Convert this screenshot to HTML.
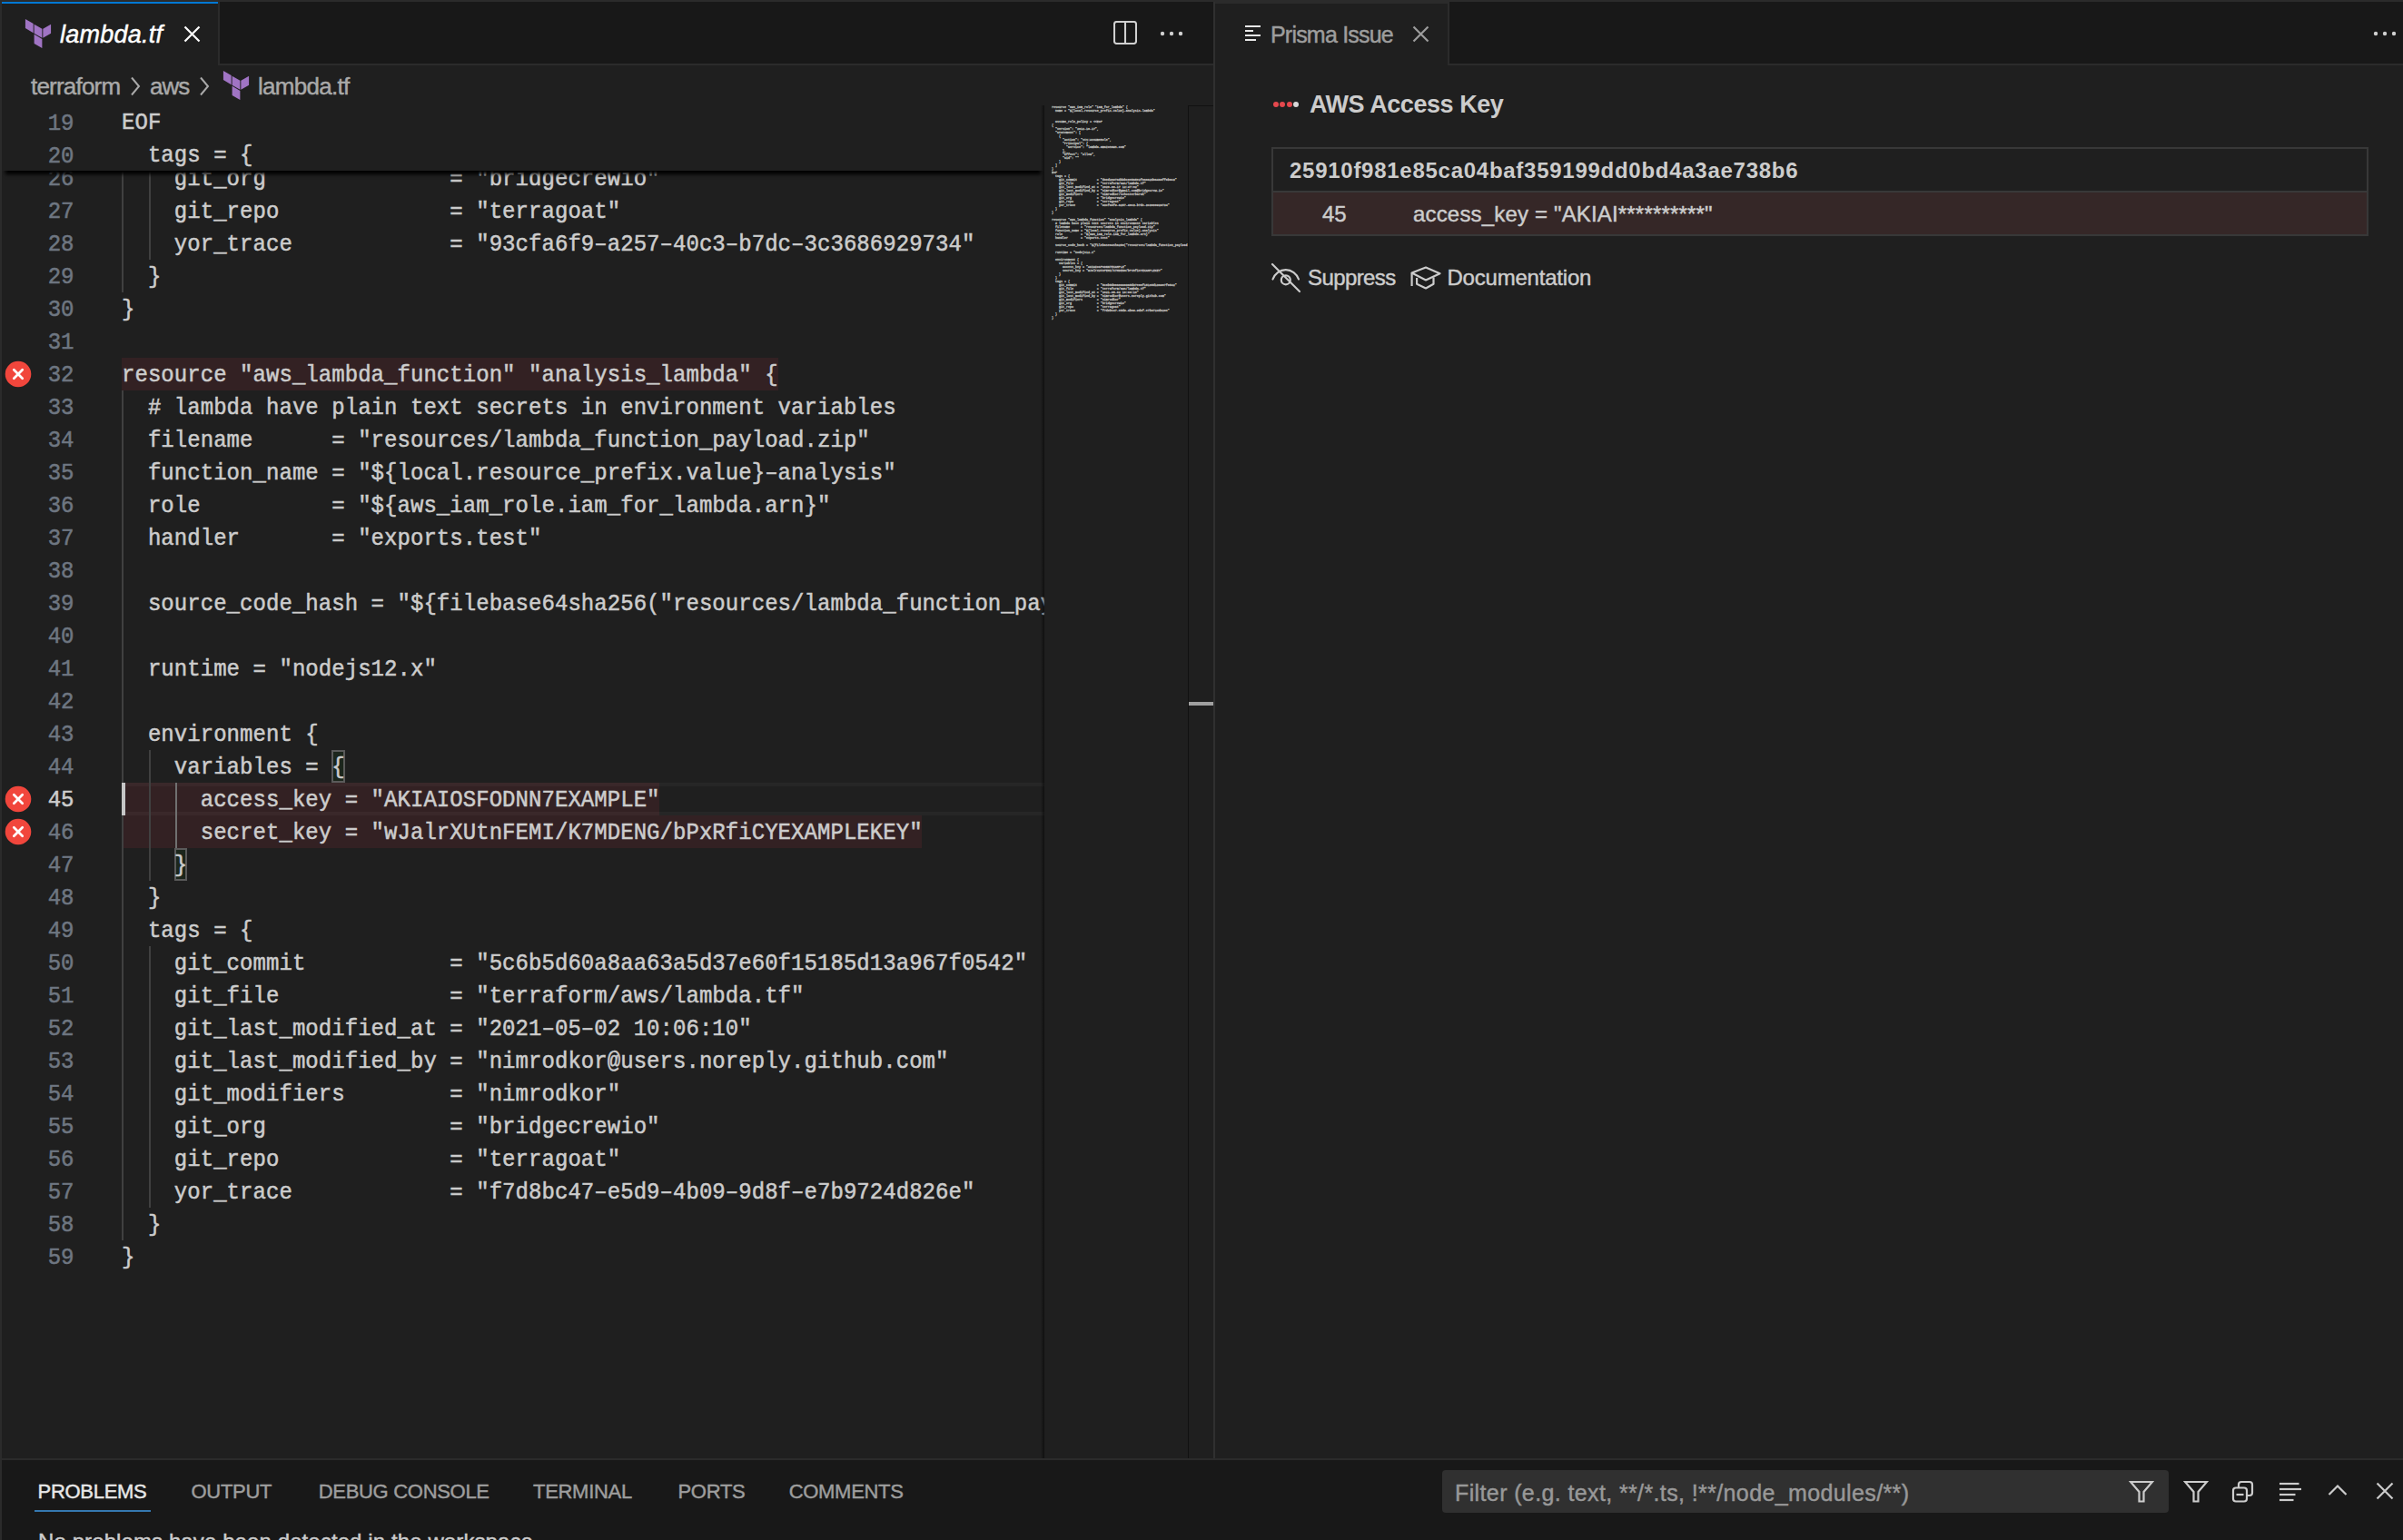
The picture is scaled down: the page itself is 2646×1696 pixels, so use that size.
<!DOCTYPE html>
<html><head><meta charset="utf-8"><style>
html,body{margin:0;padding:0}
body{width:2646px;height:1696px;background:#1f1f1f;position:relative;overflow:hidden;font-family:'Liberation Sans', sans-serif}
</style></head><body>
<div style="position:absolute;left:0px;top:0px;width:2646px;height:2px;background:#2b2b2b;"></div><div style="position:absolute;left:0px;top:0px;width:2px;height:1696px;background:#2b2b2b;"></div><div style="position:absolute;left:2px;top:2px;width:1334px;height:70px;background:#181818;"></div><div style="position:absolute;left:2px;top:70px;width:1334px;height:2px;background:#2b2b2b;"></div><div style="position:absolute;left:2px;top:2px;width:238px;height:70px;background:#1f1f1f;"></div><div style="position:absolute;left:2px;top:2px;width:238px;height:2px;background:#0078d4;"></div><div style="position:absolute;left:240px;top:2px;width:2px;height:70px;background:#2b2b2b;"></div><div style="position:absolute;left:1336px;top:2px;width:2px;height:1604px;background:#303030;"></div><div style="position:absolute;left:1338px;top:2px;width:1308px;height:70px;background:#181818;"></div><div style="position:absolute;left:1338px;top:70px;width:1308px;height:2px;background:#2b2b2b;"></div><div style="position:absolute;left:1338px;top:2px;width:256px;height:70px;background:#1f1f1f;"></div><div style="position:absolute;left:1338px;top:2px;width:256px;height:2px;background:#2b2b2b;"></div><div style="position:absolute;left:1594px;top:2px;width:2px;height:70px;background:#2b2b2b;"></div><svg style="position:absolute;left:26px;top:21px;" width="32" height="32" viewBox="0 0 24 24"><path fill="#a074c4" d="M1.44 0v7.575l6.561 3.79V3.787zm21.12 4.227l-6.561 3.791v7.574l6.56-3.787zM8.72 4.23v7.575l6.561 3.787V8.018zm0 8.405v7.575L15.28 24v-7.578z"/></svg><div style="position:absolute;left:66px;top:22px;font-family:'Liberation Sans', sans-serif;font-size:27px;line-height:32px;font-weight:400;font-style:italic;color:#ffffff;white-space:pre;letter-spacing:0.25px;-webkit-text-stroke:0.45px currentColor;">lambda.tf</div><svg style="position:absolute;left:202px;top:28px;" width="19" height="19" viewBox="0 0 19 19"><path d="M1.5 1.5L17.5 17.5M17.5 1.5L1.5 17.5" stroke="#ffffff" stroke-width="2.2" fill="none"/></svg><svg style="position:absolute;left:1226px;top:23px;" width="26" height="26" viewBox="0 0 26 26"><rect x="1" y="1" width="24" height="24" rx="2.5" stroke="#d0d0d0" stroke-width="2.1" fill="none"/><line x1="13" y1="1.5" x2="13" y2="24.5" stroke="#d0d0d0" stroke-width="2.1"/></svg><svg style="position:absolute;left:1276px;top:32px;" width="28" height="10" viewBox="0 0 28 10"><circle cx="4" cy="5" r="2.2" fill="#d0d0d0"/><circle cx="14" cy="5" r="2.2" fill="#d0d0d0"/><circle cx="24" cy="5" r="2.2" fill="#d0d0d0"/></svg><svg style="position:absolute;left:2612px;top:32px;" width="28" height="10" viewBox="0 0 28 10"><circle cx="4" cy="5" r="2.2" fill="#d0d0d0"/><circle cx="14" cy="5" r="2.2" fill="#d0d0d0"/><circle cx="24" cy="5" r="2.2" fill="#d0d0d0"/></svg><svg style="position:absolute;left:1370px;top:26px;" width="20" height="21" viewBox="0 0 20 21"><g stroke="#e8e8e8" stroke-width="2"><line x1="1" y1="3" x2="18" y2="3"/><line x1="1" y1="8" x2="10" y2="8"/><line x1="1" y1="13" x2="18" y2="13"/><line x1="1" y1="18" x2="13" y2="18"/></g></svg><div style="position:absolute;left:1399px;top:23px;font-family:'Liberation Sans', sans-serif;font-size:25px;line-height:30px;font-weight:400;font-style:normal;color:#9d9d9d;white-space:pre;letter-spacing:-0.8px;-webkit-text-stroke:0.45px currentColor;">Prisma Issue</div><svg style="position:absolute;left:1555px;top:28px;" width="20" height="20" viewBox="0 0 20 20"><path d="M1.5 1.5L17.5 17.5M17.5 1.5L1.5 17.5" stroke="#9d9d9d" stroke-width="2.2" fill="none"/></svg><div style="position:absolute;left:34px;top:79px;font-family:'Liberation Sans', sans-serif;font-size:26px;line-height:32px;font-weight:400;font-style:normal;color:#a9a9a9;white-space:pre;letter-spacing:-0.8px;-webkit-text-stroke:0.45px currentColor;">terraform</div><svg style="position:absolute;left:143px;top:84px;" width="12" height="22" viewBox="0 0 12 22"><path d="M2 1.5L10 11L2 20.5" stroke="#a9a9a9" stroke-width="2" fill="none"/></svg><div style="position:absolute;left:165px;top:79px;font-family:'Liberation Sans', sans-serif;font-size:26px;line-height:32px;font-weight:400;font-style:normal;color:#a9a9a9;white-space:pre;letter-spacing:-1.0px;-webkit-text-stroke:0.45px currentColor;">aws</div><svg style="position:absolute;left:219px;top:84px;" width="12" height="22" viewBox="0 0 12 22"><path d="M2 1.5L10 11L2 20.5" stroke="#a9a9a9" stroke-width="2" fill="none"/></svg><svg style="position:absolute;left:244px;top:78px;" width="32" height="32" viewBox="0 0 24 24"><path fill="#a074c4" d="M1.44 0v7.575l6.561 3.79V3.787zm21.12 4.227l-6.561 3.791v7.574l6.56-3.787zM8.72 4.23v7.575l6.561 3.787V8.018zm0 8.405v7.575L15.28 24v-7.578z"/></svg><div style="position:absolute;left:284px;top:79px;font-family:'Liberation Sans', sans-serif;font-size:26px;line-height:32px;font-weight:400;font-style:normal;color:#a9a9a9;white-space:pre;letter-spacing:-0.7px;-webkit-text-stroke:0.45px currentColor;">lambda.tf</div><div style="position:absolute;left:2px;top:116px;width:1148px;height:1491px;overflow:hidden"><div style="position:absolute;left:132px;top:278px;width:722.5px;height:36px;background:#332123"></div><div style="position:absolute;left:132px;top:746px;width:592.4px;height:36px;background:#332123"></div><div style="position:absolute;left:132px;top:782px;width:881.4px;height:36px;background:#332123"></div><div style="position:absolute;left:132px;top:746px;width:1016px;height:36px;box-sizing:border-box;border-top:4px solid rgba(255,255,255,0.035);border-bottom:4px solid rgba(255,255,255,0.035)"></div><div style="position:absolute;left:132.0px;top:62px;width:2px;height:144px;background:#404040"></div><div style="position:absolute;left:161.9px;top:62px;width:2px;height:108px;background:#404040"></div><div style="position:absolute;left:132.0px;top:314px;width:2px;height:936px;background:#404040"></div><div style="position:absolute;left:161.9px;top:710px;width:2px;height:144px;background:#404040"></div><div style="position:absolute;left:190.8px;top:746px;width:2px;height:72px;background:#707070"></div><div style="position:absolute;left:161.9px;top:926px;width:2px;height:288px;background:#404040"></div><div style="position:absolute;left:363.2px;top:710px;width:14.4px;height:36px;box-sizing:border-box;border:2px solid #5a5a5a;background:#1c261c"></div><div style="position:absolute;left:189.8px;top:818px;width:14.4px;height:36px;box-sizing:border-box;border:2px solid #5a5a5a;background:#1c261c"></div><div style="position:absolute;left:132px;top:63.6px;height:36px;font-family:'Liberation Mono', monospace;font-size:24px;line-height:36px;letter-spacing:0.05px;color:#cccccc;white-space:pre;transform:scaleY(1.08);transform-origin:0 24.4px;-webkit-text-stroke:0.5px currentColor;">    git_org              = &quot;bridgecrewio&quot;</div><div style="position:absolute;left:132px;top:99.6px;height:36px;font-family:'Liberation Mono', monospace;font-size:24px;line-height:36px;letter-spacing:0.05px;color:#cccccc;white-space:pre;transform:scaleY(1.08);transform-origin:0 24.4px;-webkit-text-stroke:0.5px currentColor;">    git_repo             = &quot;terragoat&quot;</div><div style="position:absolute;left:132px;top:135.6px;height:36px;font-family:'Liberation Mono', monospace;font-size:24px;line-height:36px;letter-spacing:0.05px;color:#cccccc;white-space:pre;transform:scaleY(1.08);transform-origin:0 24.4px;-webkit-text-stroke:0.5px currentColor;">    yor_trace            = &quot;93cfa6f9&#8211;a257&#8211;40c3&#8211;b7dc&#8211;3c3686929734&quot;</div><div style="position:absolute;left:132px;top:171.6px;height:36px;font-family:'Liberation Mono', monospace;font-size:24px;line-height:36px;letter-spacing:0.05px;color:#cccccc;white-space:pre;transform:scaleY(1.08);transform-origin:0 24.4px;-webkit-text-stroke:0.5px currentColor;">  }</div><div style="position:absolute;left:132px;top:207.6px;height:36px;font-family:'Liberation Mono', monospace;font-size:24px;line-height:36px;letter-spacing:0.05px;color:#cccccc;white-space:pre;transform:scaleY(1.08);transform-origin:0 24.4px;-webkit-text-stroke:0.5px currentColor;">}</div><div style="position:absolute;left:132px;top:243.6px;height:36px;font-family:'Liberation Mono', monospace;font-size:24px;line-height:36px;letter-spacing:0.05px;color:#cccccc;white-space:pre;transform:scaleY(1.08);transform-origin:0 24.4px;-webkit-text-stroke:0.5px currentColor;"></div><div style="position:absolute;left:132px;top:279.6px;height:36px;font-family:'Liberation Mono', monospace;font-size:24px;line-height:36px;letter-spacing:0.05px;color:#cccccc;white-space:pre;transform:scaleY(1.08);transform-origin:0 24.4px;-webkit-text-stroke:0.5px currentColor;">resource &quot;aws_lambda_function&quot; &quot;analysis_lambda&quot; {</div><div style="position:absolute;left:132px;top:315.6px;height:36px;font-family:'Liberation Mono', monospace;font-size:24px;line-height:36px;letter-spacing:0.05px;color:#cccccc;white-space:pre;transform:scaleY(1.08);transform-origin:0 24.4px;-webkit-text-stroke:0.5px currentColor;">  # lambda have plain text secrets in environment variables</div><div style="position:absolute;left:132px;top:351.6px;height:36px;font-family:'Liberation Mono', monospace;font-size:24px;line-height:36px;letter-spacing:0.05px;color:#cccccc;white-space:pre;transform:scaleY(1.08);transform-origin:0 24.4px;-webkit-text-stroke:0.5px currentColor;">  filename      = &quot;resources/lambda_function_payload.zip&quot;</div><div style="position:absolute;left:132px;top:387.6px;height:36px;font-family:'Liberation Mono', monospace;font-size:24px;line-height:36px;letter-spacing:0.05px;color:#cccccc;white-space:pre;transform:scaleY(1.08);transform-origin:0 24.4px;-webkit-text-stroke:0.5px currentColor;">  function_name = &quot;${local.resource_prefix.value}&#8211;analysis&quot;</div><div style="position:absolute;left:132px;top:423.6px;height:36px;font-family:'Liberation Mono', monospace;font-size:24px;line-height:36px;letter-spacing:0.05px;color:#cccccc;white-space:pre;transform:scaleY(1.08);transform-origin:0 24.4px;-webkit-text-stroke:0.5px currentColor;">  role          = &quot;${aws_iam_role.iam_for_lambda.arn}&quot;</div><div style="position:absolute;left:132px;top:459.6px;height:36px;font-family:'Liberation Mono', monospace;font-size:24px;line-height:36px;letter-spacing:0.05px;color:#cccccc;white-space:pre;transform:scaleY(1.08);transform-origin:0 24.4px;-webkit-text-stroke:0.5px currentColor;">  handler       = &quot;exports.test&quot;</div><div style="position:absolute;left:132px;top:495.6px;height:36px;font-family:'Liberation Mono', monospace;font-size:24px;line-height:36px;letter-spacing:0.05px;color:#cccccc;white-space:pre;transform:scaleY(1.08);transform-origin:0 24.4px;-webkit-text-stroke:0.5px currentColor;"></div><div style="position:absolute;left:132px;top:531.6px;height:36px;font-family:'Liberation Mono', monospace;font-size:24px;line-height:36px;letter-spacing:0.05px;color:#cccccc;white-space:pre;transform:scaleY(1.08);transform-origin:0 24.4px;-webkit-text-stroke:0.5px currentColor;">  source_code_hash = &quot;${filebase64sha256(&quot;resources/lambda_function_payload.zip&quot;)}&quot;</div><div style="position:absolute;left:132px;top:567.6px;height:36px;font-family:'Liberation Mono', monospace;font-size:24px;line-height:36px;letter-spacing:0.05px;color:#cccccc;white-space:pre;transform:scaleY(1.08);transform-origin:0 24.4px;-webkit-text-stroke:0.5px currentColor;"></div><div style="position:absolute;left:132px;top:603.6px;height:36px;font-family:'Liberation Mono', monospace;font-size:24px;line-height:36px;letter-spacing:0.05px;color:#cccccc;white-space:pre;transform:scaleY(1.08);transform-origin:0 24.4px;-webkit-text-stroke:0.5px currentColor;">  runtime = &quot;nodejs12.x&quot;</div><div style="position:absolute;left:132px;top:639.6px;height:36px;font-family:'Liberation Mono', monospace;font-size:24px;line-height:36px;letter-spacing:0.05px;color:#cccccc;white-space:pre;transform:scaleY(1.08);transform-origin:0 24.4px;-webkit-text-stroke:0.5px currentColor;"></div><div style="position:absolute;left:132px;top:675.6px;height:36px;font-family:'Liberation Mono', monospace;font-size:24px;line-height:36px;letter-spacing:0.05px;color:#cccccc;white-space:pre;transform:scaleY(1.08);transform-origin:0 24.4px;-webkit-text-stroke:0.5px currentColor;">  environment {</div><div style="position:absolute;left:132px;top:711.6px;height:36px;font-family:'Liberation Mono', monospace;font-size:24px;line-height:36px;letter-spacing:0.05px;color:#cccccc;white-space:pre;transform:scaleY(1.08);transform-origin:0 24.4px;-webkit-text-stroke:0.5px currentColor;">    variables = {</div><div style="position:absolute;left:132px;top:747.6px;height:36px;font-family:'Liberation Mono', monospace;font-size:24px;line-height:36px;letter-spacing:0.05px;color:#cccccc;white-space:pre;transform:scaleY(1.08);transform-origin:0 24.4px;-webkit-text-stroke:0.5px currentColor;">      access_key = &quot;AKIAIOSFODNN7EXAMPLE&quot;</div><div style="position:absolute;left:132px;top:783.6px;height:36px;font-family:'Liberation Mono', monospace;font-size:24px;line-height:36px;letter-spacing:0.05px;color:#cccccc;white-space:pre;transform:scaleY(1.08);transform-origin:0 24.4px;-webkit-text-stroke:0.5px currentColor;">      secret_key = &quot;wJalrXUtnFEMI/K7MDENG/bPxRfiCYEXAMPLEKEY&quot;</div><div style="position:absolute;left:132px;top:819.6px;height:36px;font-family:'Liberation Mono', monospace;font-size:24px;line-height:36px;letter-spacing:0.05px;color:#cccccc;white-space:pre;transform:scaleY(1.08);transform-origin:0 24.4px;-webkit-text-stroke:0.5px currentColor;">    }</div><div style="position:absolute;left:132px;top:855.6px;height:36px;font-family:'Liberation Mono', monospace;font-size:24px;line-height:36px;letter-spacing:0.05px;color:#cccccc;white-space:pre;transform:scaleY(1.08);transform-origin:0 24.4px;-webkit-text-stroke:0.5px currentColor;">  }</div><div style="position:absolute;left:132px;top:891.6px;height:36px;font-family:'Liberation Mono', monospace;font-size:24px;line-height:36px;letter-spacing:0.05px;color:#cccccc;white-space:pre;transform:scaleY(1.08);transform-origin:0 24.4px;-webkit-text-stroke:0.5px currentColor;">  tags = {</div><div style="position:absolute;left:132px;top:927.6px;height:36px;font-family:'Liberation Mono', monospace;font-size:24px;line-height:36px;letter-spacing:0.05px;color:#cccccc;white-space:pre;transform:scaleY(1.08);transform-origin:0 24.4px;-webkit-text-stroke:0.5px currentColor;">    git_commit           = &quot;5c6b5d60a8aa63a5d37e60f15185d13a967f0542&quot;</div><div style="position:absolute;left:132px;top:963.6px;height:36px;font-family:'Liberation Mono', monospace;font-size:24px;line-height:36px;letter-spacing:0.05px;color:#cccccc;white-space:pre;transform:scaleY(1.08);transform-origin:0 24.4px;-webkit-text-stroke:0.5px currentColor;">    git_file             = &quot;terraform/aws/lambda.tf&quot;</div><div style="position:absolute;left:132px;top:999.6px;height:36px;font-family:'Liberation Mono', monospace;font-size:24px;line-height:36px;letter-spacing:0.05px;color:#cccccc;white-space:pre;transform:scaleY(1.08);transform-origin:0 24.4px;-webkit-text-stroke:0.5px currentColor;">    git_last_modified_at = &quot;2021&#8211;05&#8211;02 10:06:10&quot;</div><div style="position:absolute;left:132px;top:1035.6px;height:36px;font-family:'Liberation Mono', monospace;font-size:24px;line-height:36px;letter-spacing:0.05px;color:#cccccc;white-space:pre;transform:scaleY(1.08);transform-origin:0 24.4px;-webkit-text-stroke:0.5px currentColor;">    git_last_modified_by = &quot;nimrodkor@users.noreply.github.com&quot;</div><div style="position:absolute;left:132px;top:1071.6px;height:36px;font-family:'Liberation Mono', monospace;font-size:24px;line-height:36px;letter-spacing:0.05px;color:#cccccc;white-space:pre;transform:scaleY(1.08);transform-origin:0 24.4px;-webkit-text-stroke:0.5px currentColor;">    git_modifiers        = &quot;nimrodkor&quot;</div><div style="position:absolute;left:132px;top:1107.6px;height:36px;font-family:'Liberation Mono', monospace;font-size:24px;line-height:36px;letter-spacing:0.05px;color:#cccccc;white-space:pre;transform:scaleY(1.08);transform-origin:0 24.4px;-webkit-text-stroke:0.5px currentColor;">    git_org              = &quot;bridgecrewio&quot;</div><div style="position:absolute;left:132px;top:1143.6px;height:36px;font-family:'Liberation Mono', monospace;font-size:24px;line-height:36px;letter-spacing:0.05px;color:#cccccc;white-space:pre;transform:scaleY(1.08);transform-origin:0 24.4px;-webkit-text-stroke:0.5px currentColor;">    git_repo             = &quot;terragoat&quot;</div><div style="position:absolute;left:132px;top:1179.6px;height:36px;font-family:'Liberation Mono', monospace;font-size:24px;line-height:36px;letter-spacing:0.05px;color:#cccccc;white-space:pre;transform:scaleY(1.08);transform-origin:0 24.4px;-webkit-text-stroke:0.5px currentColor;">    yor_trace            = &quot;f7d8bc47&#8211;e5d9&#8211;4b09&#8211;9d8f&#8211;e7b9724d826e&quot;</div><div style="position:absolute;left:132px;top:1215.6px;height:36px;font-family:'Liberation Mono', monospace;font-size:24px;line-height:36px;letter-spacing:0.05px;color:#cccccc;white-space:pre;transform:scaleY(1.08);transform-origin:0 24.4px;-webkit-text-stroke:0.5px currentColor;">  }</div><div style="position:absolute;left:132px;top:1251.6px;height:36px;font-family:'Liberation Mono', monospace;font-size:24px;line-height:36px;letter-spacing:0.05px;color:#cccccc;white-space:pre;transform:scaleY(1.08);transform-origin:0 24.4px;-webkit-text-stroke:0.5px currentColor;">}</div><div style="position:absolute;left:0px;top:63.6px;width:79.5px;text-align:right;font-family:'Liberation Mono', monospace;font-size:24px;line-height:36px;color:#6e7681;white-space:pre;transform:scaleY(1.08);transform-origin:0 24.4px;-webkit-text-stroke:0.5px currentColor;">26</div><div style="position:absolute;left:0px;top:99.6px;width:79.5px;text-align:right;font-family:'Liberation Mono', monospace;font-size:24px;line-height:36px;color:#6e7681;white-space:pre;transform:scaleY(1.08);transform-origin:0 24.4px;-webkit-text-stroke:0.5px currentColor;">27</div><div style="position:absolute;left:0px;top:135.6px;width:79.5px;text-align:right;font-family:'Liberation Mono', monospace;font-size:24px;line-height:36px;color:#6e7681;white-space:pre;transform:scaleY(1.08);transform-origin:0 24.4px;-webkit-text-stroke:0.5px currentColor;">28</div><div style="position:absolute;left:0px;top:171.6px;width:79.5px;text-align:right;font-family:'Liberation Mono', monospace;font-size:24px;line-height:36px;color:#6e7681;white-space:pre;transform:scaleY(1.08);transform-origin:0 24.4px;-webkit-text-stroke:0.5px currentColor;">29</div><div style="position:absolute;left:0px;top:207.6px;width:79.5px;text-align:right;font-family:'Liberation Mono', monospace;font-size:24px;line-height:36px;color:#6e7681;white-space:pre;transform:scaleY(1.08);transform-origin:0 24.4px;-webkit-text-stroke:0.5px currentColor;">30</div><div style="position:absolute;left:0px;top:243.6px;width:79.5px;text-align:right;font-family:'Liberation Mono', monospace;font-size:24px;line-height:36px;color:#6e7681;white-space:pre;transform:scaleY(1.08);transform-origin:0 24.4px;-webkit-text-stroke:0.5px currentColor;">31</div><div style="position:absolute;left:0px;top:279.6px;width:79.5px;text-align:right;font-family:'Liberation Mono', monospace;font-size:24px;line-height:36px;color:#6e7681;white-space:pre;transform:scaleY(1.08);transform-origin:0 24.4px;-webkit-text-stroke:0.5px currentColor;">32</div><div style="position:absolute;left:0px;top:315.6px;width:79.5px;text-align:right;font-family:'Liberation Mono', monospace;font-size:24px;line-height:36px;color:#6e7681;white-space:pre;transform:scaleY(1.08);transform-origin:0 24.4px;-webkit-text-stroke:0.5px currentColor;">33</div><div style="position:absolute;left:0px;top:351.6px;width:79.5px;text-align:right;font-family:'Liberation Mono', monospace;font-size:24px;line-height:36px;color:#6e7681;white-space:pre;transform:scaleY(1.08);transform-origin:0 24.4px;-webkit-text-stroke:0.5px currentColor;">34</div><div style="position:absolute;left:0px;top:387.6px;width:79.5px;text-align:right;font-family:'Liberation Mono', monospace;font-size:24px;line-height:36px;color:#6e7681;white-space:pre;transform:scaleY(1.08);transform-origin:0 24.4px;-webkit-text-stroke:0.5px currentColor;">35</div><div style="position:absolute;left:0px;top:423.6px;width:79.5px;text-align:right;font-family:'Liberation Mono', monospace;font-size:24px;line-height:36px;color:#6e7681;white-space:pre;transform:scaleY(1.08);transform-origin:0 24.4px;-webkit-text-stroke:0.5px currentColor;">36</div><div style="position:absolute;left:0px;top:459.6px;width:79.5px;text-align:right;font-family:'Liberation Mono', monospace;font-size:24px;line-height:36px;color:#6e7681;white-space:pre;transform:scaleY(1.08);transform-origin:0 24.4px;-webkit-text-stroke:0.5px currentColor;">37</div><div style="position:absolute;left:0px;top:495.6px;width:79.5px;text-align:right;font-family:'Liberation Mono', monospace;font-size:24px;line-height:36px;color:#6e7681;white-space:pre;transform:scaleY(1.08);transform-origin:0 24.4px;-webkit-text-stroke:0.5px currentColor;">38</div><div style="position:absolute;left:0px;top:531.6px;width:79.5px;text-align:right;font-family:'Liberation Mono', monospace;font-size:24px;line-height:36px;color:#6e7681;white-space:pre;transform:scaleY(1.08);transform-origin:0 24.4px;-webkit-text-stroke:0.5px currentColor;">39</div><div style="position:absolute;left:0px;top:567.6px;width:79.5px;text-align:right;font-family:'Liberation Mono', monospace;font-size:24px;line-height:36px;color:#6e7681;white-space:pre;transform:scaleY(1.08);transform-origin:0 24.4px;-webkit-text-stroke:0.5px currentColor;">40</div><div style="position:absolute;left:0px;top:603.6px;width:79.5px;text-align:right;font-family:'Liberation Mono', monospace;font-size:24px;line-height:36px;color:#6e7681;white-space:pre;transform:scaleY(1.08);transform-origin:0 24.4px;-webkit-text-stroke:0.5px currentColor;">41</div><div style="position:absolute;left:0px;top:639.6px;width:79.5px;text-align:right;font-family:'Liberation Mono', monospace;font-size:24px;line-height:36px;color:#6e7681;white-space:pre;transform:scaleY(1.08);transform-origin:0 24.4px;-webkit-text-stroke:0.5px currentColor;">42</div><div style="position:absolute;left:0px;top:675.6px;width:79.5px;text-align:right;font-family:'Liberation Mono', monospace;font-size:24px;line-height:36px;color:#6e7681;white-space:pre;transform:scaleY(1.08);transform-origin:0 24.4px;-webkit-text-stroke:0.5px currentColor;">43</div><div style="position:absolute;left:0px;top:711.6px;width:79.5px;text-align:right;font-family:'Liberation Mono', monospace;font-size:24px;line-height:36px;color:#6e7681;white-space:pre;transform:scaleY(1.08);transform-origin:0 24.4px;-webkit-text-stroke:0.5px currentColor;">44</div><div style="position:absolute;left:0px;top:747.6px;width:79.5px;text-align:right;font-family:'Liberation Mono', monospace;font-size:24px;line-height:36px;color:#cccccc;white-space:pre;transform:scaleY(1.08);transform-origin:0 24.4px;-webkit-text-stroke:0.5px currentColor;">45</div><div style="position:absolute;left:0px;top:783.6px;width:79.5px;text-align:right;font-family:'Liberation Mono', monospace;font-size:24px;line-height:36px;color:#6e7681;white-space:pre;transform:scaleY(1.08);transform-origin:0 24.4px;-webkit-text-stroke:0.5px currentColor;">46</div><div style="position:absolute;left:0px;top:819.6px;width:79.5px;text-align:right;font-family:'Liberation Mono', monospace;font-size:24px;line-height:36px;color:#6e7681;white-space:pre;transform:scaleY(1.08);transform-origin:0 24.4px;-webkit-text-stroke:0.5px currentColor;">47</div><div style="position:absolute;left:0px;top:855.6px;width:79.5px;text-align:right;font-family:'Liberation Mono', monospace;font-size:24px;line-height:36px;color:#6e7681;white-space:pre;transform:scaleY(1.08);transform-origin:0 24.4px;-webkit-text-stroke:0.5px currentColor;">48</div><div style="position:absolute;left:0px;top:891.6px;width:79.5px;text-align:right;font-family:'Liberation Mono', monospace;font-size:24px;line-height:36px;color:#6e7681;white-space:pre;transform:scaleY(1.08);transform-origin:0 24.4px;-webkit-text-stroke:0.5px currentColor;">49</div><div style="position:absolute;left:0px;top:927.6px;width:79.5px;text-align:right;font-family:'Liberation Mono', monospace;font-size:24px;line-height:36px;color:#6e7681;white-space:pre;transform:scaleY(1.08);transform-origin:0 24.4px;-webkit-text-stroke:0.5px currentColor;">50</div><div style="position:absolute;left:0px;top:963.6px;width:79.5px;text-align:right;font-family:'Liberation Mono', monospace;font-size:24px;line-height:36px;color:#6e7681;white-space:pre;transform:scaleY(1.08);transform-origin:0 24.4px;-webkit-text-stroke:0.5px currentColor;">51</div><div style="position:absolute;left:0px;top:999.6px;width:79.5px;text-align:right;font-family:'Liberation Mono', monospace;font-size:24px;line-height:36px;color:#6e7681;white-space:pre;transform:scaleY(1.08);transform-origin:0 24.4px;-webkit-text-stroke:0.5px currentColor;">52</div><div style="position:absolute;left:0px;top:1035.6px;width:79.5px;text-align:right;font-family:'Liberation Mono', monospace;font-size:24px;line-height:36px;color:#6e7681;white-space:pre;transform:scaleY(1.08);transform-origin:0 24.4px;-webkit-text-stroke:0.5px currentColor;">53</div><div style="position:absolute;left:0px;top:1071.6px;width:79.5px;text-align:right;font-family:'Liberation Mono', monospace;font-size:24px;line-height:36px;color:#6e7681;white-space:pre;transform:scaleY(1.08);transform-origin:0 24.4px;-webkit-text-stroke:0.5px currentColor;">54</div><div style="position:absolute;left:0px;top:1107.6px;width:79.5px;text-align:right;font-family:'Liberation Mono', monospace;font-size:24px;line-height:36px;color:#6e7681;white-space:pre;transform:scaleY(1.08);transform-origin:0 24.4px;-webkit-text-stroke:0.5px currentColor;">55</div><div style="position:absolute;left:0px;top:1143.6px;width:79.5px;text-align:right;font-family:'Liberation Mono', monospace;font-size:24px;line-height:36px;color:#6e7681;white-space:pre;transform:scaleY(1.08);transform-origin:0 24.4px;-webkit-text-stroke:0.5px currentColor;">56</div><div style="position:absolute;left:0px;top:1179.6px;width:79.5px;text-align:right;font-family:'Liberation Mono', monospace;font-size:24px;line-height:36px;color:#6e7681;white-space:pre;transform:scaleY(1.08);transform-origin:0 24.4px;-webkit-text-stroke:0.5px currentColor;">57</div><div style="position:absolute;left:0px;top:1215.6px;width:79.5px;text-align:right;font-family:'Liberation Mono', monospace;font-size:24px;line-height:36px;color:#6e7681;white-space:pre;transform:scaleY(1.08);transform-origin:0 24.4px;-webkit-text-stroke:0.5px currentColor;">58</div><div style="position:absolute;left:0px;top:1251.6px;width:79.5px;text-align:right;font-family:'Liberation Mono', monospace;font-size:24px;line-height:36px;color:#6e7681;white-space:pre;transform:scaleY(1.08);transform-origin:0 24.4px;-webkit-text-stroke:0.5px currentColor;">59</div><div style="position:absolute;left:132px;top:746px;width:4px;height:36px;background:#c6c6c6"></div><svg style="position:absolute;left:3px;top:281px" width="30" height="30" viewBox="0 0 30 30"><circle cx="15" cy="15" r="14.3" fill="#f1463c"/><path d="M10.3 10.3L19.7 19.7M19.7 10.3L10.3 19.7" stroke="#ffffff" stroke-width="2.7" stroke-linecap="round" fill="none"/></svg><svg style="position:absolute;left:3px;top:749px" width="30" height="30" viewBox="0 0 30 30"><circle cx="15" cy="15" r="14.3" fill="#f1463c"/><path d="M10.3 10.3L19.7 19.7M19.7 10.3L10.3 19.7" stroke="#ffffff" stroke-width="2.7" stroke-linecap="round" fill="none"/></svg><svg style="position:absolute;left:3px;top:785px" width="30" height="30" viewBox="0 0 30 30"><circle cx="15" cy="15" r="14.3" fill="#f1463c"/><path d="M10.3 10.3L19.7 19.7M19.7 10.3L10.3 19.7" stroke="#ffffff" stroke-width="2.7" stroke-linecap="round" fill="none"/></svg><div style="position:absolute;left:0px;top:0px;width:1148px;height:72px;background:#1f1f1f;box-shadow:0 8px 4px -4px #000000"></div><div style="position:absolute;left:132px;top:1.6px;font-family:'Liberation Mono', monospace;font-size:24px;line-height:36px;font-weight:400;font-style:normal;color:#cccccc;white-space:pre;letter-spacing:0.05px;transform:scaleY(1.08);transform-origin:0 24.4px;-webkit-text-stroke:0.5px currentColor;">EOF</div><div style="position:absolute;left:132px;top:37.6px;font-family:'Liberation Mono', monospace;font-size:24px;line-height:36px;font-weight:400;font-style:normal;color:#cccccc;white-space:pre;letter-spacing:0.05px;transform:scaleY(1.08);transform-origin:0 24.4px;-webkit-text-stroke:0.5px currentColor;">  tags = {</div><div style="position:absolute;left:0px;top:3.1px;width:79.5px;text-align:right;font-family:'Liberation Mono', monospace;font-size:24px;line-height:36px;color:#6e7681;transform:scaleY(1.08);transform-origin:0 24.4px;-webkit-text-stroke:0.5px currentColor;">19</div><div style="position:absolute;left:0px;top:39.1px;width:79.5px;text-align:right;font-family:'Liberation Mono', monospace;font-size:24px;line-height:36px;color:#6e7681;transform:scaleY(1.08);transform-origin:0 24.4px;-webkit-text-stroke:0.5px currentColor;">20</div></div><div style="position:absolute;left:1150px;top:116px;width:158px;height:1491px;overflow:hidden"><div style="position:absolute;left:8px;top:0px;height:4px;font-family:'Liberation Mono', monospace;font-size:24px;line-height:36px;color:#bdbdbd;white-space:pre;transform-origin:0 0;transform:scale(0.1385,0.135);-webkit-text-stroke:2px currentColor">resource &quot;aws_iam_role&quot; &quot;iam_for_lambda&quot; {</div><div style="position:absolute;left:8px;top:4px;height:4px;font-family:'Liberation Mono', monospace;font-size:24px;line-height:36px;color:#bdbdbd;white-space:pre;transform-origin:0 0;transform:scale(0.1385,0.135);-webkit-text-stroke:2px currentColor">  name = &quot;${local.resource_prefix.value}-analysis-lambda&quot;</div><div style="position:absolute;left:8px;top:16px;height:4px;font-family:'Liberation Mono', monospace;font-size:24px;line-height:36px;color:#bdbdbd;white-space:pre;transform-origin:0 0;transform:scale(0.1385,0.135);-webkit-text-stroke:2px currentColor">  assume_role_policy = &lt;&lt;EOF</div><div style="position:absolute;left:8px;top:20px;height:4px;font-family:'Liberation Mono', monospace;font-size:24px;line-height:36px;color:#bdbdbd;white-space:pre;transform-origin:0 0;transform:scale(0.1385,0.135);-webkit-text-stroke:2px currentColor">{</div><div style="position:absolute;left:8px;top:24px;height:4px;font-family:'Liberation Mono', monospace;font-size:24px;line-height:36px;color:#bdbdbd;white-space:pre;transform-origin:0 0;transform:scale(0.1385,0.135);-webkit-text-stroke:2px currentColor">  &quot;Version&quot;: &quot;2012-10-17&quot;,</div><div style="position:absolute;left:8px;top:28px;height:4px;font-family:'Liberation Mono', monospace;font-size:24px;line-height:36px;color:#bdbdbd;white-space:pre;transform-origin:0 0;transform:scale(0.1385,0.135);-webkit-text-stroke:2px currentColor">  &quot;Statement&quot;: [</div><div style="position:absolute;left:8px;top:32px;height:4px;font-family:'Liberation Mono', monospace;font-size:24px;line-height:36px;color:#bdbdbd;white-space:pre;transform-origin:0 0;transform:scale(0.1385,0.135);-webkit-text-stroke:2px currentColor">    {</div><div style="position:absolute;left:8px;top:36px;height:4px;font-family:'Liberation Mono', monospace;font-size:24px;line-height:36px;color:#bdbdbd;white-space:pre;transform-origin:0 0;transform:scale(0.1385,0.135);-webkit-text-stroke:2px currentColor">      &quot;Action&quot;: &quot;sts:AssumeRole&quot;,</div><div style="position:absolute;left:8px;top:40px;height:4px;font-family:'Liberation Mono', monospace;font-size:24px;line-height:36px;color:#bdbdbd;white-space:pre;transform-origin:0 0;transform:scale(0.1385,0.135);-webkit-text-stroke:2px currentColor">      &quot;Principal&quot;: {</div><div style="position:absolute;left:8px;top:44px;height:4px;font-family:'Liberation Mono', monospace;font-size:24px;line-height:36px;color:#bdbdbd;white-space:pre;transform-origin:0 0;transform:scale(0.1385,0.135);-webkit-text-stroke:2px currentColor">        &quot;Service&quot;: &quot;lambda.amazonaws.com&quot;</div><div style="position:absolute;left:8px;top:48px;height:4px;font-family:'Liberation Mono', monospace;font-size:24px;line-height:36px;color:#bdbdbd;white-space:pre;transform-origin:0 0;transform:scale(0.1385,0.135);-webkit-text-stroke:2px currentColor">      },</div><div style="position:absolute;left:8px;top:52px;height:4px;font-family:'Liberation Mono', monospace;font-size:24px;line-height:36px;color:#bdbdbd;white-space:pre;transform-origin:0 0;transform:scale(0.1385,0.135);-webkit-text-stroke:2px currentColor">      &quot;Effect&quot;: &quot;Allow&quot;,</div><div style="position:absolute;left:8px;top:56px;height:4px;font-family:'Liberation Mono', monospace;font-size:24px;line-height:36px;color:#bdbdbd;white-space:pre;transform-origin:0 0;transform:scale(0.1385,0.135);-webkit-text-stroke:2px currentColor">      &quot;Sid&quot;: &quot;&quot;</div><div style="position:absolute;left:8px;top:60px;height:4px;font-family:'Liberation Mono', monospace;font-size:24px;line-height:36px;color:#bdbdbd;white-space:pre;transform-origin:0 0;transform:scale(0.1385,0.135);-webkit-text-stroke:2px currentColor">    }</div><div style="position:absolute;left:8px;top:64px;height:4px;font-family:'Liberation Mono', monospace;font-size:24px;line-height:36px;color:#bdbdbd;white-space:pre;transform-origin:0 0;transform:scale(0.1385,0.135);-webkit-text-stroke:2px currentColor">  ]</div><div style="position:absolute;left:8px;top:68px;height:4px;font-family:'Liberation Mono', monospace;font-size:24px;line-height:36px;color:#bdbdbd;white-space:pre;transform-origin:0 0;transform:scale(0.1385,0.135);-webkit-text-stroke:2px currentColor">}</div><div style="position:absolute;left:8px;top:72px;height:4px;font-family:'Liberation Mono', monospace;font-size:24px;line-height:36px;color:#bdbdbd;white-space:pre;transform-origin:0 0;transform:scale(0.1385,0.135);-webkit-text-stroke:2px currentColor">EOF</div><div style="position:absolute;left:8px;top:76px;height:4px;font-family:'Liberation Mono', monospace;font-size:24px;line-height:36px;color:#bdbdbd;white-space:pre;transform-origin:0 0;transform:scale(0.1385,0.135);-webkit-text-stroke:2px currentColor">  tags = {</div><div style="position:absolute;left:8px;top:80px;height:4px;font-family:'Liberation Mono', monospace;font-size:24px;line-height:36px;color:#bdbdbd;white-space:pre;transform-origin:0 0;transform:scale(0.1385,0.135);-webkit-text-stroke:2px currentColor">    git_commit           = &quot;d68d2897add9bc6e5a5e2f8a6a2d6a4a6ff0b6c3&quot;</div><div style="position:absolute;left:8px;top:84px;height:4px;font-family:'Liberation Mono', monospace;font-size:24px;line-height:36px;color:#bdbdbd;white-space:pre;transform-origin:0 0;transform:scale(0.1385,0.135);-webkit-text-stroke:2px currentColor">    git_file             = &quot;terraform/aws/lambda.tf&quot;</div><div style="position:absolute;left:8px;top:88px;height:4px;font-family:'Liberation Mono', monospace;font-size:24px;line-height:36px;color:#bdbdbd;white-space:pre;transform-origin:0 0;transform:scale(0.1385,0.135);-webkit-text-stroke:2px currentColor">    git_last_modified_at = &quot;2020-06-17 12:47:02&quot;</div><div style="position:absolute;left:8px;top:92px;height:4px;font-family:'Liberation Mono', monospace;font-size:24px;line-height:36px;color:#bdbdbd;white-space:pre;transform-origin:0 0;transform:scale(0.1385,0.135);-webkit-text-stroke:2px currentColor">    git_last_modified_by = &quot;nimrodkor@gmail.com@bridgecrew.io&quot;</div><div style="position:absolute;left:8px;top:96px;height:4px;font-family:'Liberation Mono', monospace;font-size:24px;line-height:36px;color:#bdbdbd;white-space:pre;transform-origin:0 0;transform:scale(0.1385,0.135);-webkit-text-stroke:2px currentColor">    git_modifiers        = &quot;nimrodkor/schosterbarak&quot;</div><div style="position:absolute;left:8px;top:100px;height:4px;font-family:'Liberation Mono', monospace;font-size:24px;line-height:36px;color:#bdbdbd;white-space:pre;transform-origin:0 0;transform:scale(0.1385,0.135);-webkit-text-stroke:2px currentColor">    git_org              = &quot;bridgecrewio&quot;</div><div style="position:absolute;left:8px;top:104px;height:4px;font-family:'Liberation Mono', monospace;font-size:24px;line-height:36px;color:#bdbdbd;white-space:pre;transform-origin:0 0;transform:scale(0.1385,0.135);-webkit-text-stroke:2px currentColor">    git_repo             = &quot;terragoat&quot;</div><div style="position:absolute;left:8px;top:108px;height:4px;font-family:'Liberation Mono', monospace;font-size:24px;line-height:36px;color:#bdbdbd;white-space:pre;transform-origin:0 0;transform:scale(0.1385,0.135);-webkit-text-stroke:2px currentColor">    yor_trace            = &quot;93cfa6f9-a257-40c3-b7dc-3c3686929734&quot;</div><div style="position:absolute;left:8px;top:112px;height:4px;font-family:'Liberation Mono', monospace;font-size:24px;line-height:36px;color:#bdbdbd;white-space:pre;transform-origin:0 0;transform:scale(0.1385,0.135);-webkit-text-stroke:2px currentColor">  }</div><div style="position:absolute;left:8px;top:116px;height:4px;font-family:'Liberation Mono', monospace;font-size:24px;line-height:36px;color:#bdbdbd;white-space:pre;transform-origin:0 0;transform:scale(0.1385,0.135);-webkit-text-stroke:2px currentColor">}</div><div style="position:absolute;left:8px;top:124px;height:4px;font-family:'Liberation Mono', monospace;font-size:24px;line-height:36px;color:#bdbdbd;white-space:pre;transform-origin:0 0;transform:scale(0.1385,0.135);-webkit-text-stroke:2px currentColor">resource &quot;aws_lambda_function&quot; &quot;analysis_lambda&quot; {</div><div style="position:absolute;left:8px;top:128px;height:4px;font-family:'Liberation Mono', monospace;font-size:24px;line-height:36px;color:#bdbdbd;white-space:pre;transform-origin:0 0;transform:scale(0.1385,0.135);-webkit-text-stroke:2px currentColor">  # lambda have plain text secrets in environment variables</div><div style="position:absolute;left:8px;top:132px;height:4px;font-family:'Liberation Mono', monospace;font-size:24px;line-height:36px;color:#bdbdbd;white-space:pre;transform-origin:0 0;transform:scale(0.1385,0.135);-webkit-text-stroke:2px currentColor">  filename      = &quot;resources/lambda_function_payload.zip&quot;</div><div style="position:absolute;left:8px;top:136px;height:4px;font-family:'Liberation Mono', monospace;font-size:24px;line-height:36px;color:#bdbdbd;white-space:pre;transform-origin:0 0;transform:scale(0.1385,0.135);-webkit-text-stroke:2px currentColor">  function_name = &quot;${local.resource_prefix.value}-analysis&quot;</div><div style="position:absolute;left:8px;top:140px;height:4px;font-family:'Liberation Mono', monospace;font-size:24px;line-height:36px;color:#bdbdbd;white-space:pre;transform-origin:0 0;transform:scale(0.1385,0.135);-webkit-text-stroke:2px currentColor">  role          = &quot;${aws_iam_role.iam_for_lambda.arn}&quot;</div><div style="position:absolute;left:8px;top:144px;height:4px;font-family:'Liberation Mono', monospace;font-size:24px;line-height:36px;color:#bdbdbd;white-space:pre;transform-origin:0 0;transform:scale(0.1385,0.135);-webkit-text-stroke:2px currentColor">  handler       = &quot;exports.test&quot;</div><div style="position:absolute;left:8px;top:152px;height:4px;font-family:'Liberation Mono', monospace;font-size:24px;line-height:36px;color:#bdbdbd;white-space:pre;transform-origin:0 0;transform:scale(0.1385,0.135);-webkit-text-stroke:2px currentColor">  source_code_hash = &quot;${filebase64sha256(&quot;resources/lambda_function_payload.zip&quot;)}&quot;</div><div style="position:absolute;left:8px;top:160px;height:4px;font-family:'Liberation Mono', monospace;font-size:24px;line-height:36px;color:#bdbdbd;white-space:pre;transform-origin:0 0;transform:scale(0.1385,0.135);-webkit-text-stroke:2px currentColor">  runtime = &quot;nodejs12.x&quot;</div><div style="position:absolute;left:8px;top:168px;height:4px;font-family:'Liberation Mono', monospace;font-size:24px;line-height:36px;color:#bdbdbd;white-space:pre;transform-origin:0 0;transform:scale(0.1385,0.135);-webkit-text-stroke:2px currentColor">  environment {</div><div style="position:absolute;left:8px;top:172px;height:4px;font-family:'Liberation Mono', monospace;font-size:24px;line-height:36px;color:#bdbdbd;white-space:pre;transform-origin:0 0;transform:scale(0.1385,0.135);-webkit-text-stroke:2px currentColor">    variables = {</div><div style="position:absolute;left:8px;top:176px;height:4px;font-family:'Liberation Mono', monospace;font-size:24px;line-height:36px;color:#bdbdbd;white-space:pre;transform-origin:0 0;transform:scale(0.1385,0.135);-webkit-text-stroke:2px currentColor">      access_key = &quot;AKIAIOSFODNN7EXAMPLE&quot;</div><div style="position:absolute;left:8px;top:180px;height:4px;font-family:'Liberation Mono', monospace;font-size:24px;line-height:36px;color:#bdbdbd;white-space:pre;transform-origin:0 0;transform:scale(0.1385,0.135);-webkit-text-stroke:2px currentColor">      secret_key = &quot;wJalrXUtnFEMI/K7MDENG/bPxRfiCYEXAMPLEKEY&quot;</div><div style="position:absolute;left:8px;top:184px;height:4px;font-family:'Liberation Mono', monospace;font-size:24px;line-height:36px;color:#bdbdbd;white-space:pre;transform-origin:0 0;transform:scale(0.1385,0.135);-webkit-text-stroke:2px currentColor">    }</div><div style="position:absolute;left:8px;top:188px;height:4px;font-family:'Liberation Mono', monospace;font-size:24px;line-height:36px;color:#bdbdbd;white-space:pre;transform-origin:0 0;transform:scale(0.1385,0.135);-webkit-text-stroke:2px currentColor">  }</div><div style="position:absolute;left:8px;top:192px;height:4px;font-family:'Liberation Mono', monospace;font-size:24px;line-height:36px;color:#bdbdbd;white-space:pre;transform-origin:0 0;transform:scale(0.1385,0.135);-webkit-text-stroke:2px currentColor">  tags = {</div><div style="position:absolute;left:8px;top:196px;height:4px;font-family:'Liberation Mono', monospace;font-size:24px;line-height:36px;color:#bdbdbd;white-space:pre;transform-origin:0 0;transform:scale(0.1385,0.135);-webkit-text-stroke:2px currentColor">    git_commit           = &quot;5c6b5d60a8aa63a5d37e60f15185d13a967f0542&quot;</div><div style="position:absolute;left:8px;top:200px;height:4px;font-family:'Liberation Mono', monospace;font-size:24px;line-height:36px;color:#bdbdbd;white-space:pre;transform-origin:0 0;transform:scale(0.1385,0.135);-webkit-text-stroke:2px currentColor">    git_file             = &quot;terraform/aws/lambda.tf&quot;</div><div style="position:absolute;left:8px;top:204px;height:4px;font-family:'Liberation Mono', monospace;font-size:24px;line-height:36px;color:#bdbdbd;white-space:pre;transform-origin:0 0;transform:scale(0.1385,0.135);-webkit-text-stroke:2px currentColor">    git_last_modified_at = &quot;2021-05-02 10:06:10&quot;</div><div style="position:absolute;left:8px;top:208px;height:4px;font-family:'Liberation Mono', monospace;font-size:24px;line-height:36px;color:#bdbdbd;white-space:pre;transform-origin:0 0;transform:scale(0.1385,0.135);-webkit-text-stroke:2px currentColor">    git_last_modified_by = &quot;nimrodkor@users.noreply.github.com&quot;</div><div style="position:absolute;left:8px;top:212px;height:4px;font-family:'Liberation Mono', monospace;font-size:24px;line-height:36px;color:#bdbdbd;white-space:pre;transform-origin:0 0;transform:scale(0.1385,0.135);-webkit-text-stroke:2px currentColor">    git_modifiers        = &quot;nimrodkor&quot;</div><div style="position:absolute;left:8px;top:216px;height:4px;font-family:'Liberation Mono', monospace;font-size:24px;line-height:36px;color:#bdbdbd;white-space:pre;transform-origin:0 0;transform:scale(0.1385,0.135);-webkit-text-stroke:2px currentColor">    git_org              = &quot;bridgecrewio&quot;</div><div style="position:absolute;left:8px;top:220px;height:4px;font-family:'Liberation Mono', monospace;font-size:24px;line-height:36px;color:#bdbdbd;white-space:pre;transform-origin:0 0;transform:scale(0.1385,0.135);-webkit-text-stroke:2px currentColor">    git_repo             = &quot;terragoat&quot;</div><div style="position:absolute;left:8px;top:224px;height:4px;font-family:'Liberation Mono', monospace;font-size:24px;line-height:36px;color:#bdbdbd;white-space:pre;transform-origin:0 0;transform:scale(0.1385,0.135);-webkit-text-stroke:2px currentColor">    yor_trace            = &quot;f7d8bc47-e5d9-4b09-9d8f-e7b9724d826e&quot;</div><div style="position:absolute;left:8px;top:228px;height:4px;font-family:'Liberation Mono', monospace;font-size:24px;line-height:36px;color:#bdbdbd;white-space:pre;transform-origin:0 0;transform:scale(0.1385,0.135);-webkit-text-stroke:2px currentColor">  }</div><div style="position:absolute;left:8px;top:232px;height:4px;font-family:'Liberation Mono', monospace;font-size:24px;line-height:36px;color:#bdbdbd;white-space:pre;transform-origin:0 0;transform:scale(0.1385,0.135);-webkit-text-stroke:2px currentColor">}</div></div><div style="position:absolute;left:1146px;top:116px;width:4px;height:1491px;background:linear-gradient(to right, rgba(0,0,0,0), rgba(0,0,0,0.5))"></div><div style="position:absolute;left:1308px;top:116px;width:1px;height:1490px;background:#111111;"></div><div style="position:absolute;left:1308px;top:116px;width:28px;height:1px;background:#111111;"></div><div style="position:absolute;left:1309px;top:773px;width:27px;height:4px;background:#a0a0a0;"></div><div style="position:absolute;left:1401.7px;top:111.9px;width:6.2px;height:6.2px;border-radius:50%;background:#e5484d"></div><div style="position:absolute;left:1409.1px;top:111.9px;width:6.2px;height:6.2px;border-radius:50%;background:#e5484d"></div><div style="position:absolute;left:1416.8px;top:111.9px;width:6.2px;height:6.2px;border-radius:50%;background:#e5484d"></div><div style="position:absolute;left:1424px;top:111.9px;width:6.2px;height:6.2px;border-radius:50%;background:#d8d8d8"></div><div style="position:absolute;left:1442px;top:99px;font-family:'Liberation Sans', sans-serif;font-size:27px;line-height:32px;font-weight:700;font-style:normal;color:#cccccc;white-space:pre;letter-spacing:-0.45px;">AWS Access Key</div><div style="position:absolute;left:1400px;top:162px;width:1208px;height:98px;box-sizing:border-box;border:2px solid #383838"></div><div style="position:absolute;left:1402px;top:212px;width:1204px;height:46px;background:#352727;"></div><div style="position:absolute;left:1402px;top:210px;width:1204px;height:2px;background:#383838;"></div><div style="position:absolute;left:1420px;top:173px;font-family:'Liberation Sans', sans-serif;font-size:24px;line-height:30px;font-weight:700;font-style:normal;color:#cccccc;white-space:pre;letter-spacing:0.73px;">25910f981e85ca04baf359199dd0bd4a3ae738b6</div><div style="position:absolute;left:1456px;top:222px;font-family:'Liberation Sans', sans-serif;font-size:24px;line-height:28px;font-weight:400;font-style:normal;color:#cccccc;white-space:pre;letter-spacing:0px;-webkit-text-stroke:0.45px currentColor;">45</div><div style="position:absolute;left:1556px;top:222px;font-family:'Liberation Sans', sans-serif;font-size:24px;line-height:28px;font-weight:400;font-style:normal;color:#cccccc;white-space:pre;letter-spacing:0.17px;-webkit-text-stroke:0.45px currentColor;">access_key = &quot;AKIAI**********&quot;</div><svg style="position:absolute;left:1399px;top:289px;" width="34" height="34" viewBox="0 0 34 34"><g stroke="#cccccc" stroke-width="2.2" fill="none" stroke-linecap="round"><path d="M2.5 18.5 A15 15 0 0 1 31 18.5"/><circle cx="16.8" cy="19.3" r="5"/><line x1="2" y1="2" x2="32" y2="32"/></g></svg><div style="position:absolute;left:1440px;top:292px;font-family:'Liberation Sans', sans-serif;font-size:24px;line-height:28px;font-weight:400;font-style:normal;color:#cccccc;white-space:pre;letter-spacing:-0.6px;-webkit-text-stroke:0.45px currentColor;">Suppress</div><svg style="position:absolute;left:1552px;top:291px;" width="36" height="30" viewBox="0 0 36 30"><g stroke="#cccccc" stroke-width="2.2" fill="none" stroke-linejoin="round"><path d="M2.6 9.6L18 3.5L33.5 10.2L18 17.4Z"/><path d="M8.1 15V21.8L18 26.5L26.5 21.8V14.5"/><line x1="2.6" y1="9.6" x2="2.6" y2="24"/></g></svg><div style="position:absolute;left:1593.5px;top:292px;font-family:'Liberation Sans', sans-serif;font-size:24px;line-height:28px;font-weight:400;font-style:normal;color:#cccccc;white-space:pre;letter-spacing:-0.21px;-webkit-text-stroke:0.45px currentColor;">Documentation</div><div style="position:absolute;left:2px;top:1606px;width:2644px;height:2px;background:#2b2b2b;"></div><div style="position:absolute;left:2px;top:1608px;width:2644px;height:88px;background:#181818;"></div><div style="position:absolute;left:41.6px;top:1630px;font-family:'Liberation Sans', sans-serif;font-size:22px;line-height:26px;font-weight:400;font-style:normal;color:#e7e7e7;white-space:pre;letter-spacing:-0.3px;-webkit-text-stroke:0.45px currentColor;">PROBLEMS</div><div style="position:absolute;left:210.5px;top:1630px;font-family:'Liberation Sans', sans-serif;font-size:22px;line-height:26px;font-weight:400;font-style:normal;color:#9d9d9d;white-space:pre;letter-spacing:-0.3px;-webkit-text-stroke:0.45px currentColor;">OUTPUT</div><div style="position:absolute;left:350.7px;top:1630px;font-family:'Liberation Sans', sans-serif;font-size:22px;line-height:26px;font-weight:400;font-style:normal;color:#9d9d9d;white-space:pre;letter-spacing:-0.3px;-webkit-text-stroke:0.45px currentColor;">DEBUG CONSOLE</div><div style="position:absolute;left:587px;top:1630px;font-family:'Liberation Sans', sans-serif;font-size:22px;line-height:26px;font-weight:400;font-style:normal;color:#9d9d9d;white-space:pre;letter-spacing:-0.3px;-webkit-text-stroke:0.45px currentColor;">TERMINAL</div><div style="position:absolute;left:746.5px;top:1630px;font-family:'Liberation Sans', sans-serif;font-size:22px;line-height:26px;font-weight:400;font-style:normal;color:#9d9d9d;white-space:pre;letter-spacing:-0.3px;-webkit-text-stroke:0.45px currentColor;">PORTS</div><div style="position:absolute;left:868.7px;top:1630px;font-family:'Liberation Sans', sans-serif;font-size:22px;line-height:26px;font-weight:400;font-style:normal;color:#9d9d9d;white-space:pre;letter-spacing:-0.3px;-webkit-text-stroke:0.45px currentColor;">COMMENTS</div><div style="position:absolute;left:38px;top:1663px;width:128px;height:2px;background:#3578b0;"></div><div style="position:absolute;left:42px;top:1682px;font-family:'Liberation Sans', sans-serif;font-size:24px;line-height:32px;font-weight:400;font-style:normal;color:#cccccc;white-space:pre;letter-spacing:0.1px;-webkit-text-stroke:0.45px currentColor;">No problems have been detected in the workspace.</div><div style="position:absolute;left:1588px;top:1619px;width:800px;height:47px;background:#303030;border-radius:4px"></div><div style="position:absolute;left:1602px;top:1628px;font-family:'Liberation Sans', sans-serif;font-size:25px;line-height:32px;font-weight:400;font-style:normal;color:#989898;white-space:pre;letter-spacing:0.38px;-webkit-text-stroke:0.45px currentColor;">Filter (e.g. text, **/*.ts, !**/node_modules/**)</div><svg style="position:absolute;left:2344px;top:1630px;" width="28" height="26" viewBox="0 0 28 26"><path d="M2 2H26L16.5 13V23.5H11.5V13Z" stroke="#cccccc" stroke-width="2.2" fill="none" stroke-linejoin="miter"/></svg><svg style="position:absolute;left:2404px;top:1630px;" width="28" height="26" viewBox="0 0 28 26"><path d="M2 2H26L16.5 13V23.5H11.5V13Z" stroke="#cccccc" stroke-width="2.2" fill="none" stroke-linejoin="miter"/></svg><svg style="position:absolute;left:2457px;top:1630px;" width="26" height="26" viewBox="0 0 26 26"><g stroke="#cccccc" stroke-width="2.2" fill="none"><rect x="8" y="2" width="15" height="15" rx="3"/><rect x="2" y="8.5" width="15" height="15" rx="3" fill="#181818"/><line x1="5.5" y1="16" x2="13.5" y2="16"/></g></svg><svg style="position:absolute;left:2509px;top:1632px;" width="27" height="23" viewBox="0 0 27 23"><g stroke="#cccccc" stroke-width="2.2"><line x1="1" y1="2" x2="22.5" y2="2"/><line x1="1" y1="8" x2="25" y2="8"/><line x1="1" y1="14" x2="18.5" y2="14"/><line x1="1" y1="20" x2="16.5" y2="20"/></g></svg><svg style="position:absolute;left:2563px;top:1634px;" width="22" height="14" viewBox="0 0 22 14"><path d="M1.5 12L11 2.5L20.5 12" stroke="#cccccc" stroke-width="2.2" fill="none"/></svg><svg style="position:absolute;left:2616px;top:1632px;" width="20" height="20" viewBox="0 0 20 20"><path d="M1.5 1.5L18.5 18.5M18.5 1.5L1.5 18.5" stroke="#cccccc" stroke-width="2.2" fill="none"/></svg>
</body></html>
